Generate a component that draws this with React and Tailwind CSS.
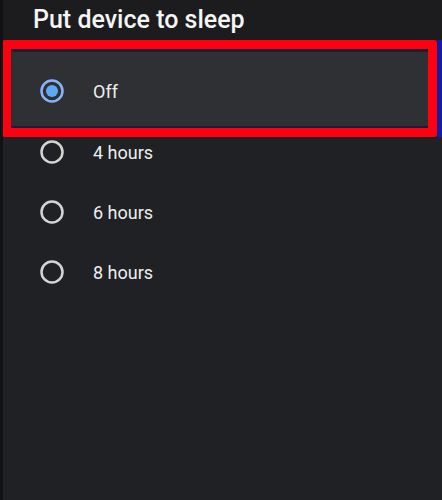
import React from "react";

const options = ["Off", "4 hours", "6 hours", "8 hours"];

function Radio({ checked }) {
    if (checked) {
        return (
            <svg width="26" height="26" viewBox="0 0 26 26">
                <circle cx="13" cy="13" r="10.5" fill="none" stroke="#8ab4f8" strokeWidth="2.5" />
                <circle cx="13" cy="13" r="6" fill="#5ea9f6" />
            </svg>
        );
    }
    return (
        <svg width="26" height="26" viewBox="0 0 26 26">
            <circle cx="13" cy="13" r="10.5" fill="none" stroke="#d4d4d4" strokeWidth="2.5" />
        </svg>
    );
}

export default function App() {
    return (
        <div
            className="relative w-[442px] h-[500px] bg-[#202124] text-white overflow-hidden border-l-[3px] border-[#111214]"
            style={{ fontFamily: "Roboto, 'Liberation Sans', sans-serif" }}
        >
            <div className="h-[44px] bg-[#1c1c1e] pl-[30px] pt-[4px]">
                <h1 className="text-[25px] font-medium leading-[32px] text-[#f5f5f5]">Put device to sleep</h1>
            </div>
            <div className="flex flex-col pt-[8px]">
                {options.map((label, index) => (
                    <div
                        key={index}
                        className={
                            index === 0
                                ? "h-[78px] -mb-[8px] flex items-center pl-[36px] gap-[28px] bg-[#2f3033]"
                                : "h-[60px] flex items-center pl-[36px] gap-[28px]"
                        }
                    >
                        <Radio checked={index === 0} />
                        <span className="text-[18px] text-[#eeeeee]">{label}</span>
                    </div>
                ))}
            </div>

            {/* highlight annotation */}
            <div className="absolute top-[40px] -left-[3px] right-0 h-[97px] border-l-[2px] border-r-[5px] border-[#1a1aa0]">
                <div className="h-full border-[9px] border-[#ff0010] rounded-[3px]">
                    <div className="h-full border-y-2 border-[#1b1b3a]"></div>
                </div>
            </div>
        </div>
    );
}
